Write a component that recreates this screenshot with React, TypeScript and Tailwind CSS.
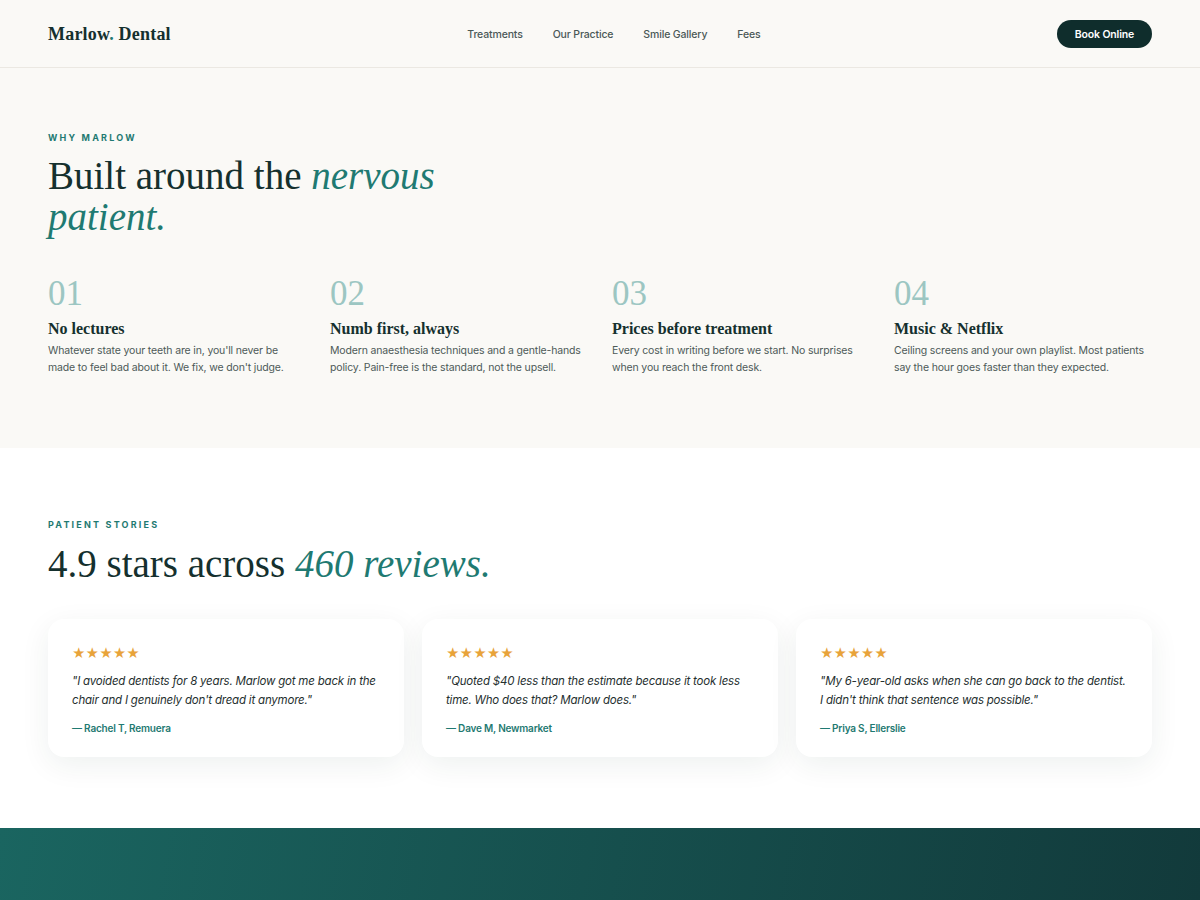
import React from "react";

const serif = { fontFamily: '"Liberation Serif", "Times New Roman", serif' };

const features = [
  { n: "01", t: "No lectures", d: "Whatever state your teeth are in, you'll never be made to feel bad about it. We fix, we don't judge." },
  { n: "02", t: "Numb first, always", d: "Modern anaesthesia techniques and a gentle-hands policy. Pain-free is the standard, not the upsell." },
  { n: "03", t: "Prices before treatment", d: "Every cost in writing before we start. No surprises when you reach the front desk." },
  { n: "04", t: "Music & Netflix", d: "Ceiling screens and your own playlist. Most patients say the hour goes faster than they expected." },
];

const reviews = [
  { q: "\"I avoided dentists for 8 years. Marlow got me back in the chair and I genuinely don't dread it anymore.\"", a: "— Rachel T, Remuera" },
  { q: "\"Quoted $40 less than the estimate because it took less time. Who does that? Marlow does.\"", a: "— Dave M, Newmarket" },
  { q: "\"My 6-year-old asks when she can go back to the dentist. I didn't think that sentence was possible.\"", a: "— Priya S, Ellerslie" },
];

export default function App() {
  return (
    <div className="min-h-[900px] bg-white text-[#15302e]" style={{ fontFamily: 'Inter, "Liberation Sans", sans-serif' }}>
      <header className="h-[68px] border-b border-[#ebe8e2] bg-[#faf9f6]">
        <div className="mx-auto flex h-full max-w-[1104px] items-center justify-between pt-[1px]">
          <div className="text-[18px] font-bold tracking-[0.2px] text-[#15302e]" style={serif}>
            Marlow<span className="text-[#1f7a72]">.</span> Dental
          </div>
          <nav className="flex items-center gap-[30px] pt-[1px] text-[10.5px] font-medium tracking-[-0.15px] text-[#4a5856]">
            <span>Treatments</span>
            <span>Our Practice</span>
            <span>Smile Gallery</span>
            <span>Fees</span>
          </nav>
          <button className="h-[28px] w-[95px] rounded-full bg-[#0f2d2c] pt-[1px] text-[10.5px] font-semibold tracking-[-0.15px] text-white">Book Online</button>
        </div>
      </header>

      <section className="bg-[#faf9f6] pb-[71px] pt-[63px]">
        <div className="mx-auto max-w-[1104px]">
          <div className="text-[9px] font-bold tracking-[2.2px] text-[#1f7a72]">WHY MARLOW</div>
          <h2 className="mt-[10px] text-[39px] leading-[41px] text-[#15302e]" style={serif}>
            Built around the <em className="text-[#1f7a72]">nervous</em>
            <br />
            <em className="text-[#1f7a72]">patient.</em>
          </h2>
          <div className="mt-[37px] grid grid-cols-4 gap-6">
            {features.map((f) => (
              <div key={f.n}>
                <div className="text-[35px] leading-[40px] text-[#9cc6c2]" style={serif}>{f.n}</div>
                <div className="mt-[5px] text-[16px] font-bold leading-[20px] text-[#15302e]" style={serif}>{f.t}</div>
                <p className="mt-[3px] text-[10.5px] leading-[17.5px] tracking-[-0.15px] text-[#4d5a58]">{f.d}</p>
              </div>
            ))}
          </div>
        </div>
      </section>

      <section className="bg-white pb-[71px] pt-[70px]">
        <div className="mx-auto max-w-[1104px]">
          <div className="text-[9px] font-bold tracking-[2.2px] text-[#1f7a72]">PATIENT STORIES</div>
          <h2 className="mt-[12px] text-[39px] leading-[41px] text-[#15302e]" style={serif}>
            4.9 stars across <em className="text-[#1f7a72]">460 reviews.</em>
          </h2>
          <div className="mt-[35px] grid grid-cols-3 gap-[18px]">
            {reviews.map((r) => (
              <div key={r.a} className="rounded-2xl bg-white px-6 pb-[21px] pt-[26px] shadow-[0_8px_30px_rgba(20,50,48,0.07)]">
                <div className="text-[13px] leading-[16px] text-[#e8a33a]">★★★★★</div>
                <p className="mt-[11px] text-[11.5px] italic leading-[19px] tracking-[-0.2px] text-[#26302f]">{r.q}</p>
                <div className="mt-[11px] text-[10px] font-semibold tracking-[-0.2px] text-[#1f7a72]">{r.a}</div>
              </div>
            ))}
          </div>
        </div>
      </section>

      <section className="h-[72px] bg-[linear-gradient(100deg,#1a6560,#123a3b)]" />
    </div>
  );
}
